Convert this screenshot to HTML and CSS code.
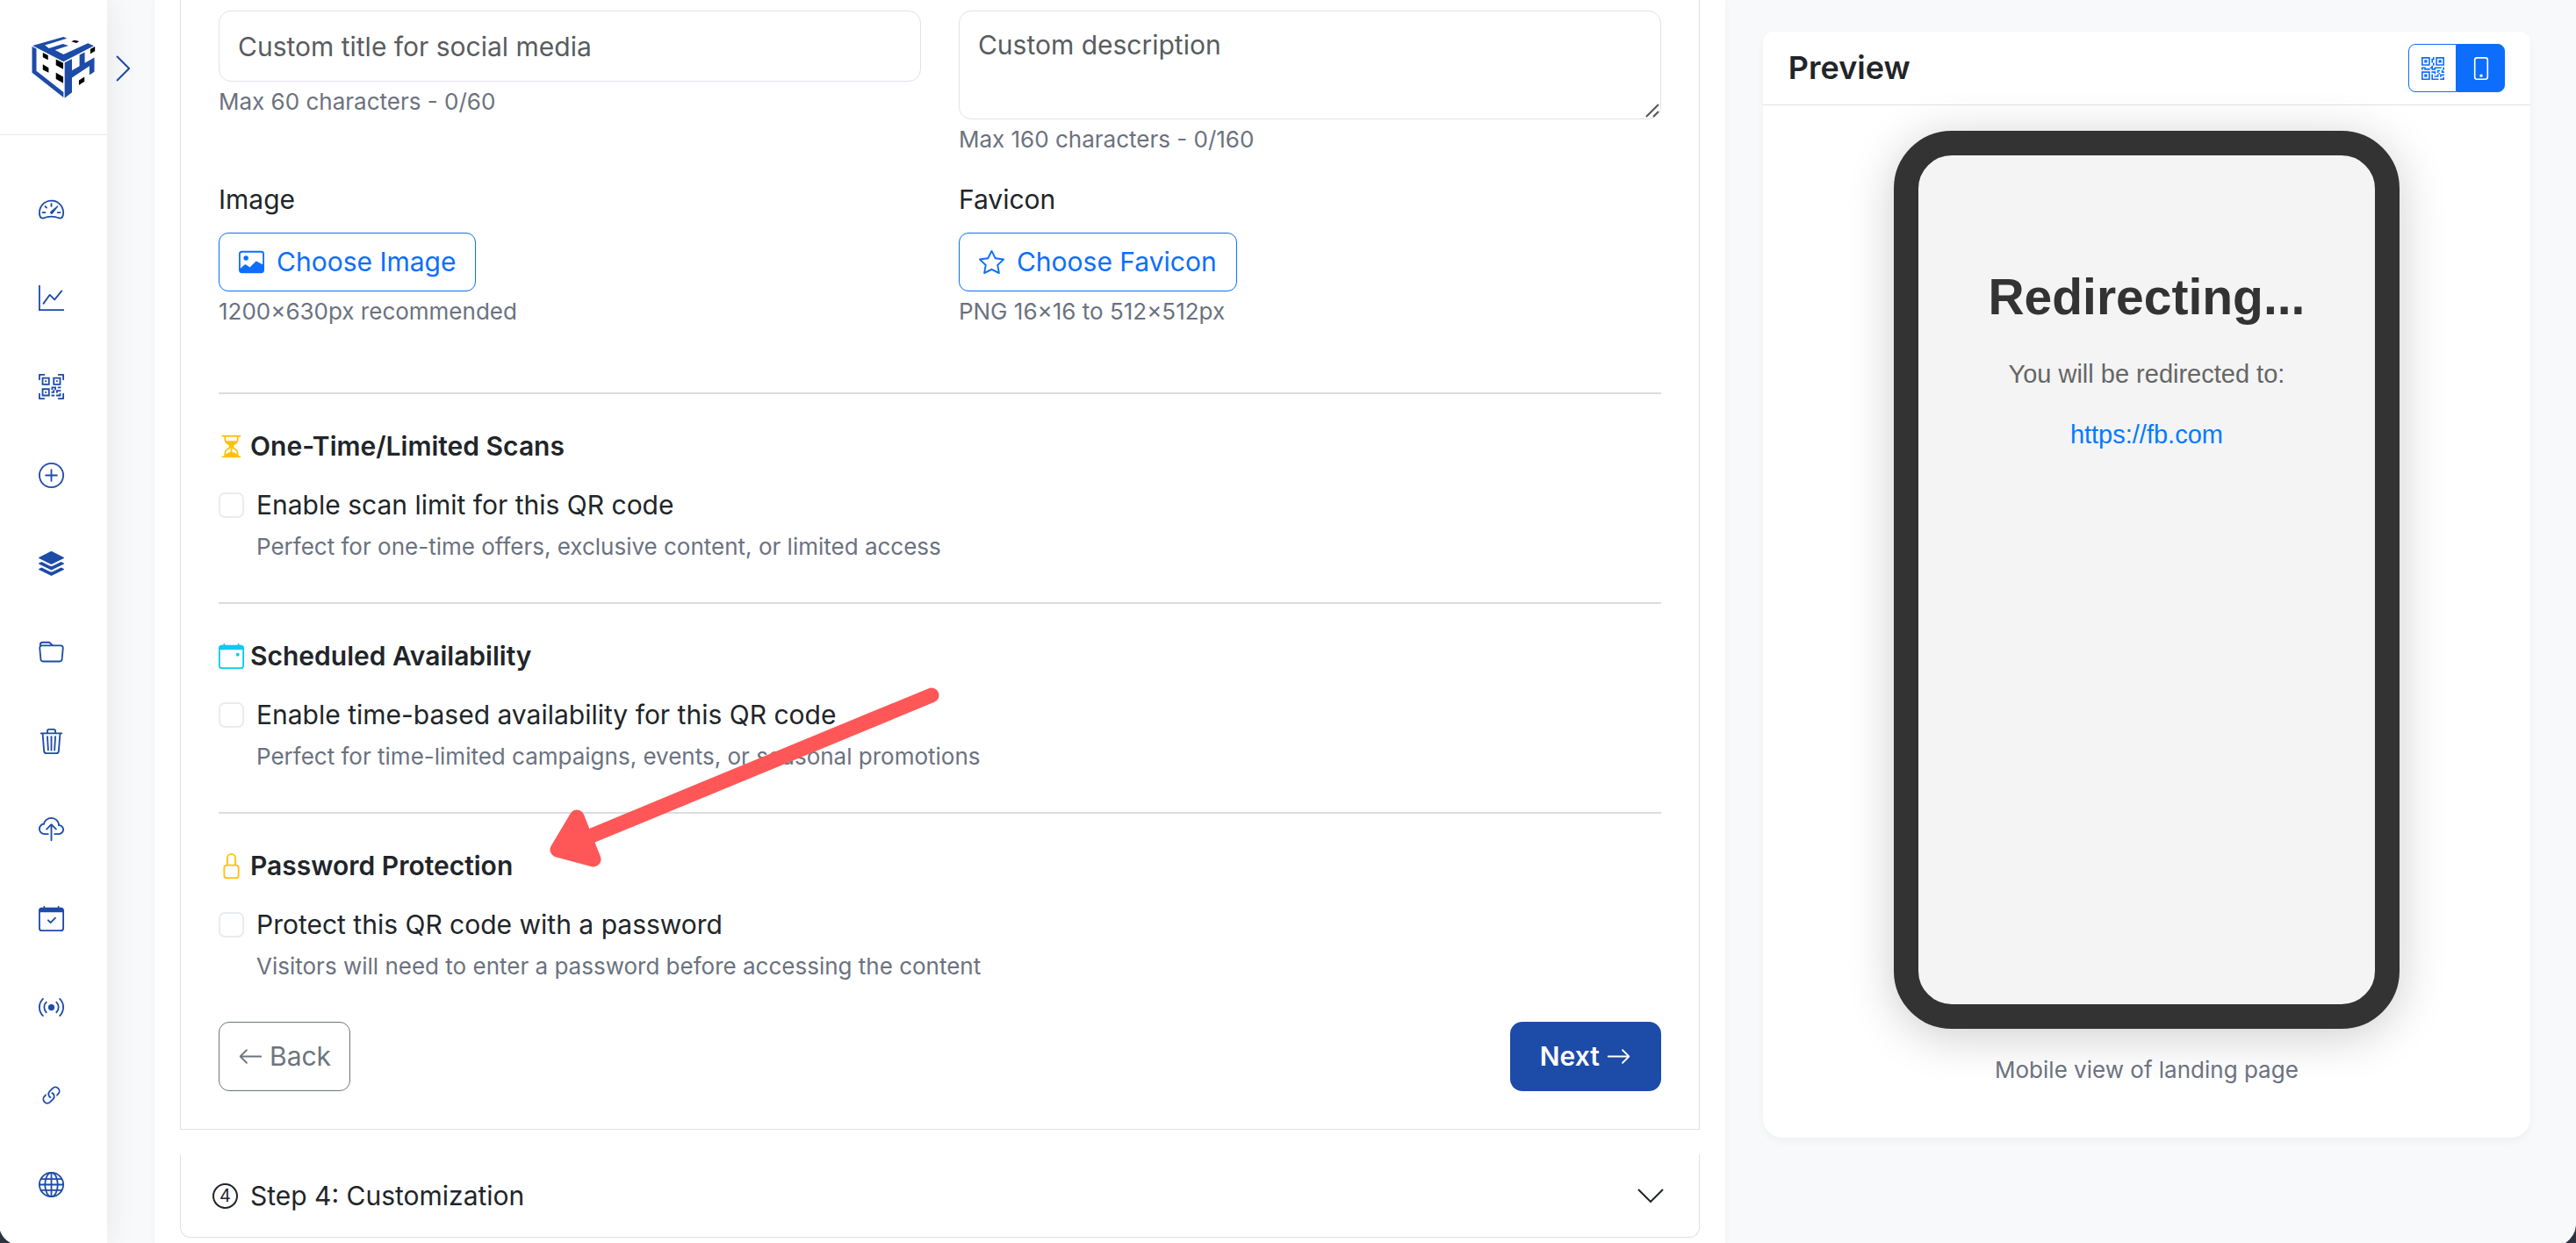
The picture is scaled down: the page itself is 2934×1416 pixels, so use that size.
FILE: index.html
```html
<!DOCTYPE html>
<html lang="en">
<head>
  <meta charset="UTF-8">
  <meta name="viewport" content="width=device-width, initial-scale=1.0">
  <title>Create QR Code</title>
  <link rel="stylesheet" href="styles.css">
</head>
<body>
  <div class="app">
    <aside class="sidebar">
      <a href="#" class="brand" aria-label="Home">
        <svg viewBox="106 122 222 214">
          <g fill="#1d4ba8">
            <path d="M112 155 218 125l12 5-76 24 14 10 48-15 19 6-46 15 29 15 84-38 20 9-104 54z"/>
            <path d="M110 158l15 8v76l93 73v18L110 248z"/>
            <path d="M222 213l25-13v40l26-15v-38l18-9v37l33-19v49l-17 11v-31l-60 40v51l-25 19z"/>
          </g>
          <g fill="#000">
            <path d="M245 141l10-5 17 4-10 6z"/>
            <path d="M147 179l18 9v16l-18-9zM147 219l20 12v17l-20-10zM192 202l25 13v21l-25-14zM192 248l25 14v22l-25-14zM310 167l16-9v16l-16 9zM271 274l19-12v16l-19 13z"/>
          </g>
        </svg>
      </a>
      <nav class="menu">
        <a href="#" aria-label="Dashboard"><svg class="icon" viewBox="0 0 16 16"><path d="M8 4a.5.5 0 0 1 .5.5V6a.5.5 0 0 1-1 0V4.500A.5.5 0 0 1 8 4zM3.732 5.732a.5.5 0 0 1 .707 0l.915.914a.5.5 0 1 1-.708.708l-.914-.915a.5.5 0 0 1 0-.707zM2 10a.5.5 0 0 1 .5-.5h1.586a.5.5 0 0 1 0 1H2.500A.5.5 0 0 1 2 10zm9.500 0a.5.5 0 0 1 .5-.5h1.500a.5.5 0 0 1 0 1H12a.5.5 0 0 1-.5-.5zm.754-4.246a.389.389 0 0 0-.527-.02L7.547 9.310a.91.91 0 1 0 1.302 1.258l3.434-4.297a.389.389 0 0 0-.029-.518z"/><path fill-rule="evenodd" d="M0 10a8 8 0 1 1 15.547 2.661c-.442 1.253-1.845 1.602-2.932 1.250C11.309 13.488 9.475 13 8 13c-1.474 0-3.310.488-4.615.911-1.087.352-2.490.003-2.932-1.250A7.988 7.988 0 0 1 0 10zm8-7a7 7 0 0 0-6.603 9.329c.203.575.923.876 1.680.630C4.397 12.533 6.358 12 8 12s3.604.532 4.923.960c.757.245 1.477-.056 1.680-.631A7 7 0 0 0 8 3z"/></svg></a>
        <a href="#" aria-label="Analytics"><svg class="icon" viewBox="0 0 16 16"><path fill-rule="evenodd" d="M0 0h1v15h15v1H0V0Zm14.817 3.113a.5.5 0 0 1 .07.704l-4.500 5.500a.5.5 0 0 1-.74.037L7.060 6.767l-3.656 5.027a.5.5 0 0 1-.808-.588l4-5.500a.5.5 0 0 1 .758-.06l2.609 2.610 4.150-5.073a.5.5 0 0 1 .704-.07Z"/></svg></a>
        <a href="#" aria-label="QR codes"><svg class="icon" viewBox="0 0 16 16"><path d="M0 .5A.5.5 0 0 1 .5 0h3a.5.5 0 0 1 0 1H1v2.500a.5.5 0 0 1-1 0v-3Zm12 0a.5.5 0 0 1 .5-.5h3a.5.5 0 0 1 .5.5v3a.5.5 0 0 1-1 0V1h-2.500a.5.5 0 0 1-.5-.5ZM.5 12a.5.5 0 0 1 .5.5V15h2.500a.5.5 0 0 1 0 1h-3a.5.5 0 0 1-.5-.5v-3a.5.5 0 0 1 .5-.5Zm15 0a.5.5 0 0 1 .5.5v3a.5.5 0 0 1-.5.5h-3a.5.5 0 0 1 0-1H15v-2.500a.5.5 0 0 1 .5-.5ZM4 4h1v1H4V4Z"/><path d="M7 2H2v5h5V2ZM3 3h3v3H3V3Zm2 8H4v1h1v-1Z"/><path d="M7 9H2v5h5V9Zm-4 1h3v3H3v-3Zm8-6h1v1h-1V4Z"/><path d="M9 2h5v5H9V2Zm1 1v3h3V3h-3ZM8 8v2h1v1H8v1h2v-2h1v2h1v-1h2v-1h-3V8H8Zm2 2H9V9h1v1Zm4 2h-1v1h-2v1h3v-2Zm-4 2v-1H8v1h2Z"/><path d="M12 9h2V8h-2v1Z"/></svg></a>
        <a href="#" aria-label="Create"><svg class="icon" viewBox="0 0 16 16"><path d="M8 15A7 7 0 1 1 8 1a7 7 0 0 1 0 14zm0 1A8 8 0 1 0 8 0a8 8 0 0 0 0 16z"/><path d="M8 4a.5.5 0 0 1 .5.5v3h3a.5.5 0 0 1 0 1h-3v3a.5.5 0 0 1-1 0v-3h-3a.5.5 0 0 1 0-1h3v-3A.5.5 0 0 1 8 4z"/></svg></a>
        <a href="#" aria-label="Bulk"><svg class="icon" viewBox="0 0 16 16"><path d="m14.120 10.163 1.715.858c.220.110.220.424 0 .534L8.267 15.340a.598.598 0 0 1-.534 0L.165 11.555a.299.299 0 0 1 0-.534l1.716-.858 5.317 2.659c.505.252 1.100.252 1.604 0l5.317-2.660zM7.733.063a.598.598 0 0 1 .534 0l7.568 3.784a.3.3 0 0 1 0 .535L8.267 8.165a.598.598 0 0 1-.534 0L.165 4.382a.299.299 0 0 1 0-.535L7.733.063z"/><path d="m14.120 6.576 1.715.858c.220.110.220.424 0 .534l-7.568 3.784a.598.598 0 0 1-.534 0L.165 7.968a.299.299 0 0 1 0-.534l1.716-.858 5.317 2.659c.505.252 1.100.252 1.604 0l5.317-2.659z"/></svg></a>
        <a href="#" aria-label="Folders"><svg class="icon" viewBox="0 0 16 16"><path d="M.54 3.870.5 3a2 2 0 0 1 2-2h3.672a2 2 0 0 1 1.414.586l.828.828A2 2 0 0 0 9.828 3h3.982a2 2 0 0 1 1.992 2.181l-.637 7A2 2 0 0 1 13.174 14H2.826a2 2 0 0 1-1.991-1.819l-.637-7a1.990 1.990 0 0 1 .342-1.310zM2.190 4a1 1 0 0 0-.996 1.090l.637 7a1 1 0 0 0 .995.910h10.348a1 1 0 0 0 .995-.910l.637-7A1 1 0 0 0 13.810 4H2.190zm4.690-1.707A1 1 0 0 0 6.172 2H2.500a1 1 0 0 0-1 .981l.006.139C1.720 3.042 1.950 3 2.190 3h5.396l-.707-.707z"/></svg></a>
        <a href="#" aria-label="Trash"><svg class="icon" viewBox="0 0 16 16"><path d="M6.500 1h3a.5.5 0 0 1 .5.5v1H6v-1a.5.5 0 0 1 .5-.5ZM11 2.500v-1A1.500 1.500 0 0 0 9.500 0h-3A1.500 1.500 0 0 0 5 1.500v1H1.500a.5.5 0 0 0 0 1h.538l.853 10.660A2 2 0 0 0 4.885 16h6.230a2 2 0 0 0 1.994-1.840l.853-10.660h.538a.5.5 0 0 0 0-1H11Zm1.958 1-.846 10.580a1 1 0 0 1-.997.920h-6.230a1 1 0 0 1-.997-.920L3.042 3.500h9.916Zm-7.487 1a.5.5 0 0 1 .528.470l.5 8.500a.5.5 0 0 1-.998.060L5 5.030a.5.5 0 0 1 .470-.530Zm5.058 0a.5.5 0 0 1 .470.530l-.5 8.500a.5.5 0 1 1-.998-.060l.5-8.500a.5.5 0 0 1 .528-.470ZM8 4.500a.5.5 0 0 1 .5.5v8.500a.5.5 0 0 1-1 0V5a.5.5 0 0 1 .5-.5Z"/></svg></a>
        <a href="#" aria-label="Upload"><svg class="icon" viewBox="0 0 16 16"><path fill-rule="evenodd" d="M4.406 1.342A5.530 5.530 0 0 1 8 0c2.690 0 4.923 2 5.166 4.579C14.758 4.804 16 6.137 16 7.773 16 9.569 14.502 11 12.687 11H10a.5.5 0 0 1 0-1h2.688C13.979 10 15 8.988 15 7.773c0-1.216-1.020-2.228-2.313-2.228h-.5v-.5C12.188 2.825 10.328 1 8 1a4.530 4.530 0 0 0-2.941 1.100c-.757.652-1.153 1.438-1.153 2.055v.448l-.445.049C2.064 4.805 1 5.952 1 7.318 1 8.785 2.230 10 3.781 10H6a.5.5 0 0 1 0 1H3.781C1.708 11 0 9.366 0 7.318c0-1.763 1.266-3.223 2.942-3.593.143-.863.698-1.723 1.464-2.383z"/><path fill-rule="evenodd" d="M7.646 4.146a.5.5 0 0 1 .708 0l3 3a.5.5 0 0 1-.708.708L8.500 5.707V14.500a.5.5 0 0 1-1 0V5.707L5.354 7.854a.5.5 0 1 1-.708-.708l3-3z"/></svg></a>
        <a href="#" aria-label="Schedule"><svg class="icon" viewBox="0 0 16 16"><path d="M10.854 7.146a.5.5 0 0 1 0 .708l-3 3a.5.5 0 0 1-.708 0l-1.500-1.500a.5.5 0 1 1 .708-.708L7.500 9.793l2.646-2.647a.5.5 0 0 1 .708 0z"/><path d="M3.500 0a.5.5 0 0 1 .5.5V1h8V.5a.5.5 0 0 1 1 0V1h1a2 2 0 0 1 2 2v11a2 2 0 0 1-2 2H2a2 2 0 0 1-2-2V3a2 2 0 0 1 2-2h1V.5a.5.5 0 0 1 .5-.5zM1 4v10a1 1 0 0 0 1 1h12a1 1 0 0 0 1-1V4H1z"/></svg></a>
        <a href="#" aria-label="Broadcast"><svg class="icon" viewBox="0 0 16 16"><path d="M3.050 3.050a7 7 0 0 0 0 9.900.5.5 0 0 1-.707.707 8 8 0 0 1 0-11.314.5.5 0 0 1 .707.707zm2.122 2.122a4 4 0 0 0 0 5.656.5.5 0 1 1-.708.708 5 5 0 0 1 0-7.072.5.5 0 0 1 .708.708zm5.656-.708a.5.5 0 0 1 .708 0 5 5 0 0 1 0 7.072.5.5 0 1 1-.708-.708 4 4 0 0 0 0-5.656.5.5 0 0 1 0-.708zm2.122-2.120a.5.5 0 0 1 .707 0 8 8 0 0 1 0 11.313.5.5 0 0 1-.707-.707 7 7 0 0 0 0-9.900.5.5 0 0 1 0-.707zM10 8a2 2 0 1 1-4 0 2 2 0 0 1 4 0z"/></svg></a>
        <a href="#" aria-label="Links"><svg class="icon" viewBox="0 0 16 16"><path d="M4.715 6.542 3.343 7.914a3 3 0 1 0 4.243 4.243l1.828-1.829A3 3 0 0 0 8.586 5.500L8 6.086a1.002 1.002 0 0 0-.154.199 2 2 0 0 1 .861 3.337L6.880 11.450a2 2 0 1 1-2.830-2.830l.793-.792a4.018 4.018 0 0 1-.128-1.287z"/><path d="M6.586 4.672A3 3 0 0 0 7.414 9.500l.775-.776a2 2 0 0 1-.896-3.346L9.120 3.550a2 2 0 1 1 2.830 2.830l-.793.792c.112.420.155.855.128 1.287l1.372-1.372a3 3 0 1 0-4.243-4.243L6.586 4.672z"/></svg></a>
        <a href="#" aria-label="Domains"><svg class="icon" viewBox="0 0 16 16"><g fill="none" stroke="currentColor"><circle cx="8" cy="8" r="7.500"/><ellipse cx="8" cy="8" rx="4" ry="7.500"/><path d="M8 .5v15M.5 8h15M1.500 4.500h13M1.500 11.500h13"/></g></svg></a>
      </nav>
    </aside>

    <div class="gutter">
      <button class="toggle" aria-label="Expand menu"><svg viewBox="0 0 16 30"><path d="M1 1l14 14L1 29"/></svg></button>
    </div>

    <main class="main">
      <form class="card">
        <div class="fields">
          <div class="field">
            <input id="title" class="control" type="text" placeholder="Custom title for social media" aria-label="Title">
            <small>Max 60 characters - 0/60</small>
          </div>
          <div class="field">
            <div class="area">
              <textarea id="description" class="control" placeholder="Custom description" aria-label="Description"></textarea>
              <svg class="grip" viewBox="0 0 16 16"><path d="M1 15 15 1M9 15l6-6"/></svg>
            </div>
            <small>Max 160 characters - 0/160</small>
          </div>
          <div class="field">
            <label for="chooseImage">Image</label>
            <button type="button" id="chooseImage" class="btn btn-pick"><svg class="icon" viewBox="0 0 16 16"><path d="M6.002 5.500a1.500 1.500 0 1 1-3 0 1.500 1.500 0 0 1 3 0z"/><path d="M2.002 1a2 2 0 0 0-2 2v10a2 2 0 0 0 2 2h12a2 2 0 0 0 2-2V3a2 2 0 0 0-2-2h-12zm12 1a1 1 0 0 1 1 1v6.500l-3.777-1.947a.5.5 0 0 0-.577.093l-3.710 3.710-2.660-1.772a.5.5 0 0 0-.630.062L1.002 12V3a1 1 0 0 1 1-1h12z"/></svg>Choose Image</button>
            <small>1200×630px recommended</small>
          </div>
          <div class="field">
            <label for="chooseFavicon">Favicon</label>
            <button type="button" id="chooseFavicon" class="btn btn-pick"><svg class="icon" viewBox="0 0 16 16"><path d="M2.866 14.850c-.078.444.360.791.746.593l4.390-2.256 4.389 2.256c.386.198.824-.149.746-.592l-.830-4.730 3.522-3.356c.330-.314.160-.888-.282-.950l-4.898-.696L8.465.792a.513.513 0 0 0-.927 0L5.354 5.120l-4.898.696c-.441.062-.612.636-.283.950l3.523 3.356-.830 4.730zm4.905-2.767-3.686 1.894.694-3.957a.565.565 0 0 0-.163-.505L1.710 6.745l4.052-.576a.525.525 0 0 0 .393-.288L8 2.223l1.847 3.658a.525.525 0 0 0 .393.288l4.052.575-2.906 2.770a.565.565 0 0 0-.163.506l.694 3.957-3.686-1.894a.503.503 0 0 0-.461 0z"/></svg>Choose Favicon</button>
            <small>PNG 16×16 to 512×512px</small>
          </div>
        </div>

        <section class="option">
          <h2><svg class="icon yellow" viewBox="0 0 16 16"><path d="M2.500 15a.5.5 0 1 1 0-1h1v-1a4.500 4.500 0 0 1 2.557-4.060c.290-.139.443-.377.443-.590v-.700c0-.213-.154-.451-.443-.590A4.500 4.500 0 0 1 3.500 3V2h-1a.5.5 0 0 1 0-1h11a.5.5 0 0 1 0 1h-1v1a4.500 4.500 0 0 1-2.557 4.060c-.290.139-.443.377-.443.590v.700c0 .213.154.451.443.590A4.500 4.500 0 0 1 12.500 13v1h1a.5.5 0 0 1 0 1h-11zm2-13v1c0 .537.120 1.045.337 1.500h6.326c.216-.455.337-.963.337-1.500V2h-7zm3 6.350c0 .701-.478 1.236-1.011 1.492A3.500 3.500 0 0 0 4.500 13s.866-1.299 3-1.480V8.350zm1 0v3.170c2.134.181 3 1.480 3 1.480a3.500 3.500 0 0 0-1.989-3.158C8.978 9.586 8.500 9.052 8.500 8.351z"/></svg>One-Time/Limited Scans</h2>
          <div class="check">
            <input type="checkbox" id="scanLimit">
            <label for="scanLimit">Enable scan limit for this QR code</label>
            <small>Perfect for one-time offers, exclusive content, or limited access</small>
          </div>
        </section>

        <section class="option">
          <h2><svg class="icon cyan" viewBox="0 0 16 16"><path d="M11 6.500a.5.5 0 0 1 .5-.5h1a.5.5 0 0 1 .5.5v1a.5.5 0 0 1-.5.5h-1a.5.5 0 0 1-.5-.5v-1z"/><path d="M3.500 0a.5.5 0 0 1 .5.5V1h8V.5a.5.5 0 0 1 1 0V1h1a2 2 0 0 1 2 2v11a2 2 0 0 1-2 2H2a2 2 0 0 1-2-2V3a2 2 0 0 1 2-2h1V.5a.5.5 0 0 1 .5-.5zM1 4v10a1 1 0 0 0 1 1h12a1 1 0 0 0 1-1V4H1z"/></svg>Scheduled Availability</h2>
          <div class="check">
            <input type="checkbox" id="schedule">
            <label for="schedule">Enable time-based availability for this QR code</label>
            <small>Perfect for time-limited campaigns, events, or seasonal promotions</small>
          </div>
        </section>

        <section class="option">
          <h2><svg class="icon yellow" viewBox="0 0 16 16"><path d="M8 1a2 2 0 0 1 2 2v4H6V3a2 2 0 0 1 2-2zm3 6V3a3 3 0 0 0-6 0v4a2 2 0 0 0-2 2v5a2 2 0 0 0 2 2h6a2 2 0 0 0 2-2V9a2 2 0 0 0-2-2zM5 8h6a1 1 0 0 1 1 1v5a1 1 0 0 1-1 1H5a1 1 0 0 1-1-1V9a1 1 0 0 1 1-1z"/></svg>Password Protection</h2>
          <div class="check">
            <input type="checkbox" id="password">
            <label for="password">Protect this QR code with a password</label>
            <small>Visitors will need to enter a password before accessing the content</small>
          </div>
          <!-- pointer drawn over the options -->
          <svg class="arrow" viewBox="0 0 450 212"><path d="M437 10 45 172" stroke-linecap="round"/><path d="M33 149 11 186l41 11z" fill="#ff5757" stroke-linejoin="round"/></svg>
        </section>

        <div class="actions">
          <button type="button" class="btn btn-back"><svg class="icon" viewBox="0 0 16 16"><path d="M15 8a.5.5 0 0 0-.5-.5H2.707l3.147-3.146a.5.5 0 1 0-.708-.708l-4 4a.5.5 0 0 0 0 .708l4 4a.5.5 0 0 0 .708-.708L2.707 8.500H14.500A.5.5 0 0 0 15 8z"/></svg>Back</button>
          <button type="button" class="btn btn-next">Next<svg class="icon" viewBox="0 0 16 16"><path d="M1 8a.5.5 0 0 1 .5-.5h11.793l-3.147-3.146a.5.5 0 0 1 .708-.708l4 4a.5.5 0 0 1 0 .708l-4 4a.5.5 0 0 1-.708-.708L13.293 8.500H1.500A.5.5 0 0 1 1 8z"/></svg></button>
        </div>
      </form>

      <button class="step"><span class="num">4</span>Step 4: Customization<svg class="down" viewBox="0 0 30 16"><path d="M1 1l14 14L29 1"/></svg></button>
    </main>

    <aside class="preview">
      <div class="preview-head">
        <h1>Preview</h1>
        <div class="switch">
          <button aria-label="QR code"><svg class="icon" viewBox="0 0 16 16"><path d="M2 2h2v2H2V2Z"/><path d="M6 0v6H0V0h6ZM5 1H1v4h4V1ZM4 12H2v2h2v-2Z"/><path d="M6 10v6H0v-6h6Zm-5 1v4h4v-4H1Zm11-9h2v2h-2V2Z"/><path d="M10 0v6h6V0h-6Zm5 1v4h-4V1h4ZM8 1V0h1v2H8v2H7V1h1Zm0 5V4h1v2H8ZM6 8V7h1V6h1v2h1V7h5v1h-4v1H7V8H6Zm0 0v1H2V8H1v1H0V7h3v1h3Zm10 1h-1V7h1v2Zm-1 0h-1v2h2v-1h-1V9Zm-4 0h2v1h-1v1h-1V9Zm2 3v-1h-1v1h-1v1H9v1h3v-2h1Zm0 0h3v1h-2v1h-1v-2Zm-4-1v1h1v-2H7v1h2Z"/><path d="M7 12h1v3h4v1H7v-4Zm9 2v2h-3v-1h2v-1h1Z"/></svg></button>
          <button class="active" aria-label="Mobile"><svg class="icon" viewBox="0 0 16 16"><path d="M11 1a1 1 0 0 1 1 1v12a1 1 0 0 1-1 1H5a1 1 0 0 1-1-1V2a1 1 0 0 1 1-1h6zM5 0a2 2 0 0 0-2 2v12a2 2 0 0 0 2 2h6a2 2 0 0 0 2-2V2a2 2 0 0 0-2-2H5z"/><path d="M8 14a1 1 0 1 0 0-2 1 1 0 0 0 0 2z"/></svg></button>
        </div>
      </div>
      <div class="preview-body">
        <div class="phone">
          <h2>Redirecting...</h2>
          <p>You will be redirected to:</p>
          <a href="#">https://fb.com</a>
        </div>
        <small>Mobile view of landing page</small>
      </div>
    </aside>
  </div>

  <svg class="corner left" viewBox="0 0 12 14"><path d="M0 0q3 9 12 14H0z"/></svg>
  <svg class="corner right" viewBox="0 0 12 20"><path d="M12 0q-1 12-12 20h12z"/></svg>
</body>
</html>
```
FILE: styles.css
```css
* {
  box-sizing: border-box;
}
body {
  margin: 0;
  font-family: Inter, sans-serif;
  font-size: 30px;
  line-height: 43px;
  color: #212529;
  background: #f8f9fb;
  overflow: hidden;
}
h1, h2, p {
  margin: 0;
}
small {
  display: block;
  font-size: 26px;
  line-height: 38px;
  color: #6b7280;
}
button {
  font: inherit;
  color: inherit;
  cursor: pointer;
}
a {
  text-decoration: none;
}
.icon {
  width: 29px;
  height: 29px;
  fill: currentColor;
  flex: none;
}
.app {
  display: flex;
  min-height: 100vh;
}

/* sidebar */
.sidebar {
  width: 122px;
  flex: none;
  background: #fff;
  box-shadow: 0 0 36px rgba(0, 0, 0, 0.08);
}
.brand {
  display: flex;
  justify-content: center;
  padding: 41px 0;
  padding-left: 22px;
  border-bottom: 1px solid #e5e7eb;
}
.brand svg {
  width: 74px;
  height: 71px;
}
.menu {
  display: flex;
  flex-direction: column;
  align-items: center;
  gap: 72px;
  padding: 70px 5px 0 0;
}
.menu a {
  display: flex;
  color: #1d4ba8;
}
.gutter {
  width: 54px;
  flex: none;
  padding: 63px 0 0 10px;
}
.toggle {
  display: flex;
  padding: 0;
  border: 0;
  background: none;
}
.toggle svg {
  width: 16px;
  height: 30px;
  fill: none;
  stroke: #1d4ba8;
  stroke-width: 2;
}

/* form */
.main {
  flex: 198 1 0;
  min-width: 0;
  padding: 0 29px;
  background: #fff;
  box-shadow: 0 0 8px rgba(0, 0, 0, 0.04);
}
.card {
  padding: 12px 43px 43px;
  border: 1px solid #dee2e6;
  border-top: 0;
}
.fields {
  display: grid;
  grid-template-columns: 1fr 1fr;
  column-gap: 43px;
  row-gap: 28px;
  margin-bottom: 73px;
}
.control {
  display: block;
  width: 100%;
  height: 81px;
  margin-bottom: 4px;
  padding: 17px 21px;
  border: 1px solid #dfe3e8;
  border-radius: 14px;
  background: #fff;
  font: inherit;
  line-height: 43px;
}
.area {
  position: relative;
}
textarea.control {
  height: 124px;
  resize: none;
}
.grip {
  position: absolute;
  right: 2px;
  bottom: 2px;
  width: 16px;
  height: 16px;
  stroke: #555;
  stroke-width: 2;
}
.control::placeholder {
  color: #595c5f;
  opacity: 1;
}
.field > label {
  display: block;
  margin-bottom: 16px;
}
.btn {
  display: flex;
  align-items: center;
  border: 1px solid;
  border-radius: 12px;
  background: none;
}
.btn-pick {
  gap: 14px;
  height: 67px;
  margin-bottom: 4px;
  padding: 0 22px;
  border-radius: 11px;
  color: #0d6efd;
}
.option {
  position: relative;
  padding: 38px 0 44px;
  border-top: 2px solid #dcdddf;
}
.option h2 {
  display: flex;
  align-items: center;
  gap: 7px;
  margin-bottom: 24px;
  font-size: 30px;
  font-weight: 600;
}
.yellow {
  color: #ffc107;
}
.cyan {
  color: #0dcaf0;
}
.check {
  display: grid;
  grid-template-columns: 29px 1fr;
  column-gap: 14px;
  row-gap: 7px;
  align-items: center;
}
.check input {
  appearance: none;
  width: 29px;
  height: 29px;
  margin: 0;
  border: 2px solid #e9ecef;
  border-radius: 7px;
}
.check small {
  grid-column: 2;
}
.arrow {
  position: absolute;
  left: 375px;
  top: -145px;
  width: 450px;
  height: 212px;
  stroke: #ff5757;
  stroke-width: 17;
}
.actions {
  display: flex;
  justify-content: space-between;
}
.btn-back {
  gap: 7px;
  height: 79px;
  padding: 0 21px;
  color: #6c757d;
}
.btn-next {
  gap: 7px;
  height: 79px;
  padding: 0 34px;
  border: 0;
  border-radius: 14px;
  background: #1d4ba8;
  color: #fff;
  font-weight: 600;
}
.step {
  display: flex;
  align-items: center;
  width: 100%;
  height: 95px;
  margin-top: 28px;
  padding: 0 40px 0 36px;
  border: 1px solid #dee2e6;
  border-top: 0;
  border-radius: 0 0 12px 12px;
  background: #fff;
}
.num {
  width: 29px;
  height: 29px;
  margin-right: 14px;
  border: 2px solid;
  border-radius: 50%;
  font-size: 20px;
  line-height: 25px;
}
.down {
  width: 30px;
  height: 16px;
  margin-left: auto;
  fill: none;
  stroke: #212529;
  stroke-width: 2;
}

/* preview */
.preview {
  flex: 100 1 0;
  min-width: 0;
  align-self: flex-start;
  margin: 36px 52px 0 43px;
  background: #fff;
  border-radius: 12px 12px 22px 22px;
  box-shadow: 0 4px 8px rgba(0, 0, 0, 0.04);
}
.preview-head {
  display: flex;
  align-items: center;
  justify-content: space-between;
  padding: 14px 29px;
  border-bottom: 1px solid #dee2e6;
}
.preview-head h1 {
  font-size: 36px;
  font-weight: 600;
}
.switch {
  display: flex;
}
.switch button {
  display: flex;
  align-items: center;
  justify-content: center;
  width: 55px;
  height: 55px;
  padding: 0;
  border: 1px solid #0d6efd;
  border-radius: 8px 0 0 8px;
  background: #fff;
  color: #0d6efd;
}
.switch .icon {
  width: 26px;
  height: 26px;
}
.switch .active {
  border-radius: 0 8px 8px 0;
  background: #0d6efd;
  color: #fff;
}
.preview-body {
  display: flex;
  flex-direction: column;
  align-items: center;
  gap: 28px;
  padding: 29px 28px 58px;
}
.phone {
  width: 576px;
  height: 1023px;
  padding: 128px 28px;
  border: 28px solid #333;
  border-radius: 66px;
  background: #f4f4f4;
  box-shadow: 0 8px 54px rgba(0, 0, 0, 0.2);
  font-family: "Liberation Sans", Arial, sans-serif;
  font-size: 29px;
  text-align: center;
}
.phone h2 {
  margin-bottom: 34px;
  font-size: 57px;
  line-height: 66px;
  color: #333;
}
.phone p {
  margin-bottom: 26px;
  color: #666;
}
.phone a {
  color: #007bff;
}

/* rounded window corners */
.corner {
  position: fixed;
  bottom: 0;
  width: 12px;
  fill: #2d3340;
}
.left {
  left: 0;
  height: 14px;
}
.right {
  right: 0;
  height: 20px;
}
```
